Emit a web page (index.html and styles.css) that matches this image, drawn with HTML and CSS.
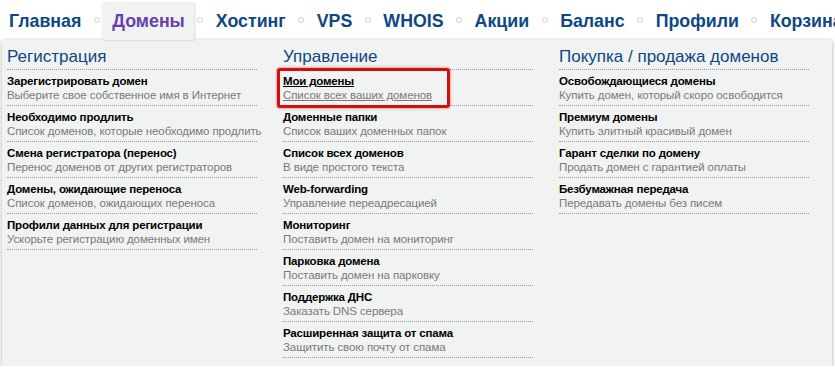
FILE: index.html
```html
<!DOCTYPE html>
<html lang="ru">

<head>
    <meta charset="UTF-8">
    <meta name="viewport" content="width=device-width, initial-scale=1.0">
    <title>Домены</title>
    <link rel="stylesheet" href="styles.css">
</head>

<body>
    <ul class="nav">
        <li class="nav-item"><a href="#">Главная</a></li>
        <li class="sep"></li>
        <li class="nav-item active"><a href="#">Домены</a></li>
        <li class="sep"></li>
        <li class="nav-item"><a href="#">Хостинг</a></li>
        <li class="sep"></li>
        <li class="nav-item"><a href="#">VPS</a></li>
        <li class="sep"></li>
        <li class="nav-item"><a href="#">WHOIS</a></li>
        <li class="sep"></li>
        <li class="nav-item"><a href="#">Акции</a></li>
        <li class="sep"></li>
        <li class="nav-item"><a href="#">Баланс</a></li>
        <li class="sep"></li>
        <li class="nav-item"><a href="#">Профили</a></li>
        <li class="sep"></li>
        <li class="nav-item"><a href="#">Корзина</a></li>
    </ul>

    <div class="dropdown">
        <div class="col">
            <h3>Регистрация</h3>
            <a class="entry" href="#"><b>Зарегистрировать домен</b><span>Выберите свое собственное имя в Интернет</span></a>
            <a class="entry" href="#"><b>Необходимо продлить</b><span>Список доменов, которые необходимо продлить</span></a>
            <a class="entry" href="#"><b>Смена регистратора (перенос)</b><span>Перенос доменов от других регистраторов</span></a>
            <a class="entry" href="#"><b>Домены, ожидающие переноса</b><span>Список доменов, ожидающих переноса</span></a>
            <a class="entry" href="#"><b>Профили данных для регистрации</b><span>Ускорьте регистрацию доменных имен</span></a>
        </div>

        <div class="col">
            <h3>Управление</h3>
            <a class="entry current" href="#"><b>Мои домены</b><span>Список всех ваших доменов</span></a>
            <a class="entry" href="#"><b>Доменные папки</b><span>Список ваших доменных папок</span></a>
            <a class="entry" href="#"><b>Список всех доменов</b><span>В виде простого текста</span></a>
            <a class="entry" href="#"><b>Web-forwarding</b><span>Управление переадресацией</span></a>
            <a class="entry" href="#"><b>Мониторинг</b><span>Поставить домен на мониторинг</span></a>
            <a class="entry" href="#"><b>Парковка домена</b><span>Поставить домен на парковку</span></a>
            <a class="entry" href="#"><b>Поддержка ДНС</b><span>Заказать DNS сервера</span></a>
            <a class="entry" href="#"><b>Расширенная защита от спама</b><span>Защитить свою почту от спама</span></a>
        </div>

        <div class="col">
            <h3>Покупка / продажа доменов</h3>
            <a class="entry" href="#"><b>Освобождающиеся домены</b><span>Купить домен, который скоро освободится</span></a>
            <a class="entry" href="#"><b>Премиум домены</b><span>Купить элитный красивый домен</span></a>
            <a class="entry" href="#"><b>Гарант сделки по домену</b><span>Продать домен с гарантией оплаты</span></a>
            <a class="entry" href="#"><b>Безбумажная передача</b><span>Передавать домены без писем</span></a>
        </div>
    </div>
</body>

</html>
```

FILE: styles.css
```css
body {
    margin: 0;
    font-family: "Liberation Sans", Arial, sans-serif;
    background-color: #fff;
    overflow: hidden;
}

.nav {
    display: flex;
    margin: 0;
    padding: 0;
    height: 40px;
    list-style: none;
    white-space: nowrap;
}

.nav-item {
    margin-top: 3px;
    padding: 0 9px;
    line-height: 37px;
    font-size: 17.8px;
    font-weight: bold;
}

.nav-item a {
    color: #0d4884;
    text-decoration: none;
}

.nav-item.active {
    position: relative;
    z-index: 2;
    background-color: #f1f2f2;
    box-shadow: 1px 0 2px rgba(0, 0, 0, 0.15), -1px 0 2px rgba(0, 0, 0, 0.08);
}

.nav-item.active a {
    color: #6641ae;
}

.sep {
    display: flex;
    align-items: center;
    justify-content: center;
    width: 13px;
    flex-shrink: 0;
}

.sep::before {
    content: "";
    width: 4px;
    height: 4px;
    border: 1px solid #cfd2d4;
    border-radius: 50%;
}

.dropdown {
    position: relative;
    z-index: 1;
    display: grid;
    grid-template-columns: repeat(3, 250px);
    column-gap: 26px;
    width: 825px;
    height: 320px;
    margin-left: 2px;
    padding: 6px 0 0 5px;
    background-color: #f1f2f2;
    box-shadow: 0 1px 4px rgba(0, 0, 0, 0.35);
}

.col {
    display: flex;
    flex-direction: column;
}

.col h3 {
    margin: 0;
    padding-bottom: 2px;
    font-size: 17px;
    line-height: 21px;
    font-weight: normal;
    color: #0d4884;
    border-bottom: 1px dotted #9a9a9a;
}

.entry {
    display: block;
    padding: 4px 0 3px;
    font-size: 11.5px;
    line-height: 14px;
    white-space: nowrap;
    text-decoration: none;
    border-bottom: 1px dotted #9a9a9a;
}

.entry b {
    display: block;
    color: #000;
    letter-spacing: -0.17px;
}

.entry span {
    display: block;
    color: #7a7a7a;
    letter-spacing: -0.1px;
}

.entry.current {
    position: relative;
}

.entry.current b,
.entry.current span {
    display: table;
    text-decoration: underline;
}

.entry.current::after {
    content: "";
    position: absolute;
    left: -6px;
    top: -2px;
    width: 167px;
    height: 34px;
    border: 3px solid #d20f0f;
    border-radius: 3px;
    box-shadow: 0 0 3px rgba(200, 0, 0, 0.6);
}
```
